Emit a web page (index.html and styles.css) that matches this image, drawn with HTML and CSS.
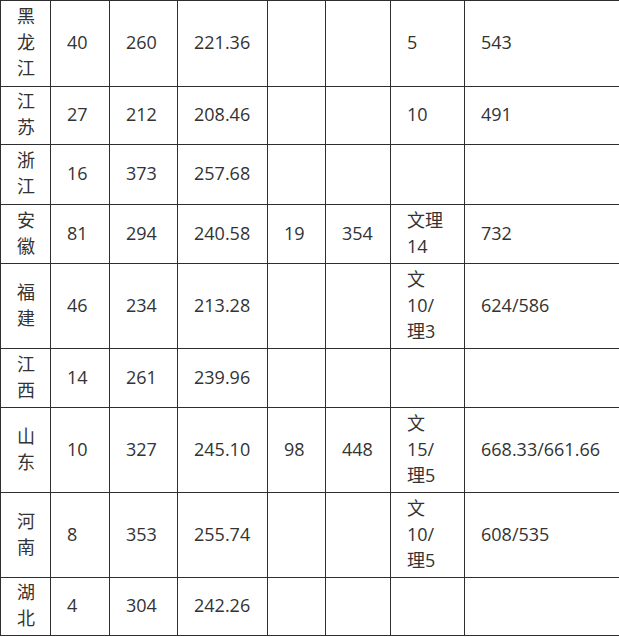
FILE: index.html
```html
<!DOCTYPE html>
<html lang="zh-CN">
<head>
<meta charset="utf-8">
<title>表</title>
<link rel="stylesheet" href="styles.css">
</head>
<body>
<table class="data">
  <colgroup>
    <col class="c1"><col class="c2"><col class="c3"><col class="c4"><col class="c5"><col class="c6"><col class="c7"><col class="c8">
  </colgroup>
  <tbody>
    <tr class="h86"><td>黑龙江</td><td>40</td><td>260</td><td>221.36</td><td></td><td></td><td class="narrow">5</td><td>543</td></tr>
    <tr class="h58"><td>江苏</td><td>27</td><td>212</td><td>208.46</td><td></td><td></td><td class="narrow">10</td><td>491</td></tr>
    <tr class="h60"><td>浙江</td><td>16</td><td>373</td><td>257.68</td><td></td><td></td><td class="narrow"></td><td></td></tr>
    <tr class="h59"><td>安徽</td><td>81</td><td>294</td><td>240.58</td><td>19</td><td>354</td><td class="narrow">文理14</td><td>732</td></tr>
    <tr class="h85"><td>福建</td><td>46</td><td>234</td><td>213.28</td><td></td><td></td><td class="narrow">文10/理3</td><td>624/586</td></tr>
    <tr class="h59"><td>江西</td><td>14</td><td>261</td><td>239.96</td><td></td><td></td><td class="narrow"></td><td></td></tr>
    <tr class="h85"><td>山东</td><td>10</td><td>327</td><td>245.10</td><td>98</td><td>448</td><td class="narrow">文15/理5</td><td>668.33/661.66</td></tr>
    <tr class="h85"><td>河南</td><td>8</td><td>353</td><td>255.74</td><td></td><td></td><td class="narrow">文10/理5</td><td>608/535</td></tr>
    <tr class="h58"><td>湖北</td><td>4</td><td>304</td><td>242.26</td><td></td><td></td><td class="narrow"></td><td></td></tr>
  </tbody>
</table>
</body>
</html>
```

FILE: styles.css
```css
html, body {
  margin: 0;
  padding: 0;
  background: #ffffff;
}

.data {
  border-collapse: collapse;
  table-layout: fixed;
  width: 619px;
  font-family: "Open Sans", "Noto Sans CJK SC", sans-serif;
  font-size: 18px;
  line-height: 26px;
  color: #333333;
}

.data td {
  border: 1.5px solid #2e2e2e;
  padding: 1px 8px 4px 16px;
  vertical-align: middle;
  text-align: left;
}

.data td.narrow {
  padding-right: 14px;
}

.c1 { width: 50px; }
.c2 { width: 59px; }
.c3 { width: 68px; }
.c4 { width: 90px; }
.c5 { width: 58px; }
.c6 { width: 65px; }
.c7 { width: 74px; }
.c8 { width: 155px; }

.h86 { height: 86px; }
.h85 { height: 85px; }
.h60 { height: 60px; }
.h59 { height: 59px; }
.h58 { height: 58px; }
```
